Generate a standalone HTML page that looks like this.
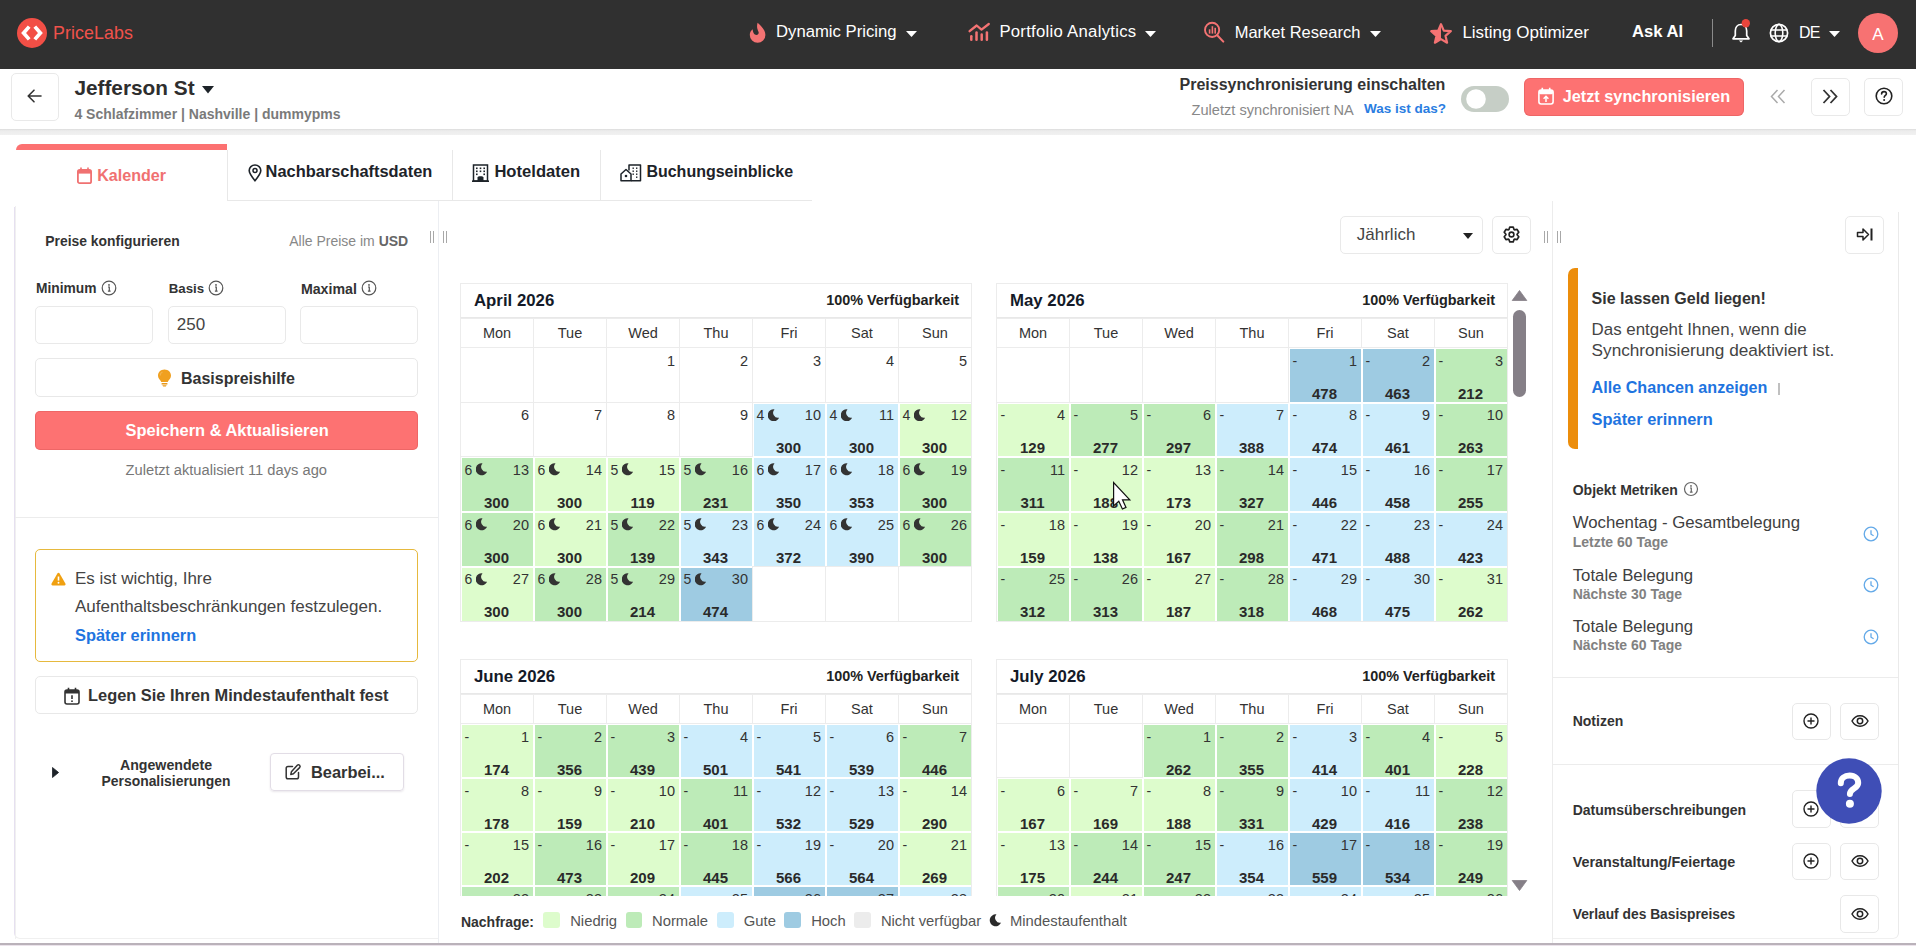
<!DOCTYPE html><html><head><meta charset="utf-8"><style>
*{margin:0;padding:0}
html,body{width:1916px;height:946px;overflow:hidden;background:#fff;font-family:"Liberation Sans", sans-serif;}
.t{position:absolute;white-space:nowrap;line-height:1;}
.month{position:absolute;width:512px;height:340px;}
.mhead{position:absolute;left:0;top:0;width:512px;height:36px;border:1px solid #ececec;border-bottom:2px solid #e8e8e8;box-sizing:border-box}
.dn{position:absolute;top:35px;height:30px;border:1px solid #ececec;box-sizing:border-box;text-align:center;line-height:28px;font-size:14.5px;color:#333}
.cell{position:absolute;box-sizing:border-box} .wc{border:1px solid #ececec} .wc .dt{top:5.5px}
.mbord{position:absolute;left:0;top:36px;width:512px;border:1px solid #ececec;border-top:0;box-sizing:border-box;pointer-events:none}
.fill{position:absolute;left:2px;top:1px;right:0;bottom:1px}
.nied{background:#ddfccc} .norm{background:#bdebb8} .gute{background:#cdedfc} .hoch{background:#9ecbe2}
.ms{position:absolute;left:4.5px;top:5.5px;font-size:14px;line-height:1;color:#333}
.moon{position:absolute;left:15.5px;top:6px;width:11.6px;height:12.6px}
.dt{position:absolute;right:4px;top:5.5px;font-size:14.5px;line-height:1;color:#333}
.pr{position:absolute;left:0;right:0;text-align:center;top:37.5px;font-size:15px;font-weight:700;line-height:1;color:#2a2a2a}
</style></head><body>
<div style="position:absolute;left:0px;top:0px;width:1916px;height:69px;box-sizing:border-box;background:#303030"></div>
<svg style="position:absolute;left:17px;top:18px;overflow:visible" width="30" height="30" viewBox="0 0 30 30"><circle cx="15" cy="15" r="15" fill="#f24f46"/><path d="M12.2 8.6 L6.6 15 L12.2 21.4 M17.8 8.6 L23.4 15 L17.8 21.4" stroke="#fff" stroke-width="3.7" fill="none" stroke-linecap="butt" stroke-linejoin="miter"/></svg>
<span class="t" style="left:53.0px;top:24.9px;font-size:17.8px;font-weight:400;color:#f0524b;letter-spacing:0.1px;">PriceLabs</span>
<svg style="position:absolute;left:749px;top:22px;overflow:visible" width="17" height="21" viewBox="0 0 17 21"><path d="M8.6 0.8 C11.8 4 16.4 7.5 16.4 13 A7.8 7.8 0 0 1 0.8 13 C0.8 10.6 1.7 8.7 3.7 7.2 C3.7 10 5.2 12.9 7.5 12.9 C9.2 12.9 10.1 11.4 9.5 9.8 C8.6 7.5 7.3 5 8.6 0.8 Z" fill="#f47373"/></svg>
<span class="t" style="left:776.0px;top:23.9px;font-size:16.7px;font-weight:400;color:#fff;">Dynamic Pricing</span>
<svg style="position:absolute;left:906px;top:30.5px;overflow:visible" width="11" height="6" viewBox="0 0 11 6"><path d="M0 0 L11 0 L5.5 6 Z" fill="#fff"/></svg>
<svg style="position:absolute;left:968px;top:22px;overflow:visible" width="22" height="20" viewBox="0 0 22 20"><path d="M1.6 9.2 L8.7 3.5 L13.5 7.6 L20.8 2" stroke="#f47373" stroke-width="2.3" fill="none" stroke-linecap="round" stroke-linejoin="round"/><g stroke="#f47373" stroke-width="2.5" stroke-linecap="round"><path d="M3.3 14.2 L3.3 17.8"/><path d="M8.5 10.6 L8.5 17.8"/><path d="M13.7 12.6 L13.7 17.8"/><path d="M18.9 10.6 L18.9 17.8"/></g></svg>
<span class="t" style="left:999.4px;top:23.9px;font-size:16.7px;font-weight:400;color:#fff;letter-spacing:0.28px;">Portfolio Analytics</span>
<svg style="position:absolute;left:1145px;top:30.5px;overflow:visible" width="11" height="6" viewBox="0 0 11 6"><path d="M0 0 L11 0 L5.5 6 Z" fill="#fff"/></svg>
<svg style="position:absolute;left:1203px;top:22px;overflow:visible" width="22" height="21" viewBox="0 0 22 21"><circle cx="9.1" cy="7.9" r="7.1" stroke="#f47373" stroke-width="1.9" fill="none"/><path d="M14.2 13.2 L20.3 19.6" stroke="#f47373" stroke-width="2.1" stroke-linecap="round"/><rect x="5.8" y="7.3" width="1.6" height="4.3" fill="#f47373"/><rect x="8.6" y="4.2" width="1.6" height="7.4" fill="#f47373"/><rect x="11.4" y="5.8" width="1.6" height="5.8" fill="#f47373"/></svg>
<span class="t" style="left:1234.7px;top:24.0px;font-size:16.5px;font-weight:400;color:#fff;">Market Research</span>
<svg style="position:absolute;left:1370px;top:30.5px;overflow:visible" width="11" height="6" viewBox="0 0 11 6"><path d="M0 0 L11 0 L5.5 6 Z" fill="#fff"/></svg>
<svg style="position:absolute;left:1430px;top:23px;overflow:visible" width="22" height="21" viewBox="0 0 22 21"><path d="M11 1.2 L13.8 7.6 L20.8 8.2 L15.5 12.8 L17.1 19.7 L11 16.1 L4.9 19.7 L6.5 12.8 L1.2 8.2 L8.2 7.6 Z" fill="none" stroke="#f47373" stroke-width="2.2" stroke-linejoin="round"/><path d="M11 1.2 L11 16.1 L4.9 19.7 L6.5 12.8 L1.2 8.2 L8.2 7.6 Z" fill="#f47373"/></svg>
<span class="t" style="left:1462.4px;top:23.6px;font-size:17px;font-weight:400;color:#fff;">Listing Optimizer</span>
<span class="t" style="left:1632.0px;top:24.4px;font-size:16.6px;font-weight:700;color:#fff;">Ask AI</span>
<div style="position:absolute;left:1712px;top:19px;width:1px;height:28px;box-sizing:border-box;background:#8a8a8a"></div>
<svg style="position:absolute;left:1731px;top:20px;overflow:visible" width="22" height="25" viewBox="0 0 22 25"><path d="M10 4.5 C6.2 4.5 4.3 7.5 4.3 11 L4.3 15.5 L2 18.8 L18 18.8 L15.7 15.5 L15.7 11 C15.7 7.5 13.8 4.5 10 4.5 Z" stroke="#fff" stroke-width="1.7" fill="none" stroke-linejoin="round"/><path d="M7.8 20.5 L12.2 20.5 L10 22.6 Z" fill="#fff"/><circle cx="14.8" cy="3.2" r="4.2" fill="#e8453c"/></svg>
<svg style="position:absolute;left:1769px;top:23px;overflow:visible" width="20" height="20" viewBox="0 0 20 20"><circle cx="10" cy="10" r="8.6" stroke="#fff" stroke-width="1.7" fill="none"/><ellipse cx="10" cy="10" rx="3.8" ry="8.6" stroke="#fff" stroke-width="1.6" fill="none"/><path d="M1.6 7 L18.4 7 M1.6 13 L18.4 13" stroke="#fff" stroke-width="1.6"/></svg>
<span class="t" style="left:1799.0px;top:24.8px;font-size:16px;font-weight:400;color:#fff;letter-spacing:-0.8px;">DE</span>
<svg style="position:absolute;left:1829px;top:30.5px;overflow:visible" width="11" height="6" viewBox="0 0 11 6"><path d="M0 0 L11 0 L5.5 6 Z" fill="#fff"/></svg>
<svg style="position:absolute;left:1858px;top:13px;overflow:visible" width="40" height="40" viewBox="0 0 40 40"><circle cx="20" cy="20" r="20" fill="#f77272"/></svg>
<span class="t" style="left:1878.0px;transform:translateX(-50%);top:25.6px;font-size:17px;font-weight:400;color:#fff;">A</span>
<div style="position:absolute;left:0;top:129px;width:1916px;height:6px;background:linear-gradient(#dcdcdc,#ececec 30%,#f1f1f1)"></div>
<div style="position:absolute;left:11px;top:73px;width:48px;height:48px;box-sizing:border-box;border:1px solid #e9e9e9;border-radius:5px;background:#fff"></div>
<svg style="position:absolute;left:27px;top:89px;overflow:visible" width="15" height="14" viewBox="0 0 15 14"><path d="M14 7 L1.5 7 M7 1.2 L1.2 7 L7 12.8" stroke="#333" stroke-width="1.6" fill="none" stroke-linecap="round" stroke-linejoin="round"/></svg>
<span class="t" style="left:74.4px;top:78.2px;font-size:20.8px;font-weight:700;color:#2e2e2e;">Jefferson St</span>
<svg style="position:absolute;left:201.5px;top:86px;overflow:visible" width="12" height="7.5" viewBox="0 0 12 7.5"><path d="M0 0 L12 0 L6.0 7.5 Z" fill="#1d2329"/></svg>
<span class="t" style="left:74.4px;top:107.4px;font-size:14px;font-weight:700;color:#7a7a7a;">4 Schlafzimmer | Nashville | dummypms</span>
<span class="t" style="left:1179.5px;top:76.6px;font-size:16px;font-weight:700;color:#333;">Preissynchronisierung einschalten</span>
<span class="t" style="left:1191.6px;top:102.9px;font-size:14.6px;font-weight:400;color:#888;">Zuletzt synchronisiert NA</span>
<span class="t" style="left:1364.0px;top:102.4px;font-size:13.5px;font-weight:700;color:#2a7de1;">Was ist das?</span>
<div style="position:absolute;left:1461px;top:86px;width:48px;height:26px;box-sizing:border-box;background:#c6cec6;border-radius:13px"></div>
<svg style="position:absolute;left:1465.5px;top:89px;overflow:visible" width="20" height="20" viewBox="0 0 20 20"><circle cx="10" cy="10" r="9.8" fill="#fff"/></svg>
<div style="position:absolute;left:1524px;top:78px;width:220px;height:38px;box-sizing:border-box;background:#fd7272;border-radius:6px;box-shadow:inset 0 0 0 1px rgba(210,80,80,0.35)"></div>
<svg style="position:absolute;left:1537.5px;top:87px;overflow:visible" width="16" height="18" viewBox="0 0 16 18"><rect x="0.9" y="3" width="14.2" height="14" rx="2.2" stroke="#fff" stroke-width="1.6" fill="none"/><rect x="1" y="3" width="14" height="4.2" rx="1.5" fill="#fff"/><path d="M4.3 0.8 L4.3 4 M11.7 0.8 L11.7 4" stroke="#fff" stroke-width="1.6"/><path d="M8 15 L8 9.5 M5.6 11.8 L8 9.3 L10.4 11.8" stroke="#fff" stroke-width="1.5" fill="none"/></svg>
<span class="t" style="left:1562.7px;top:87.7px;font-size:16.3px;font-weight:700;color:#fff;">Jetzt synchronisieren</span>
<svg style="position:absolute;left:1770px;top:89px;overflow:visible" width="16" height="15" viewBox="0 0 16 15"><path d="M7.5 1 L1.5 7.5 L7.5 14 M14.5 1 L8.5 7.5 L14.5 14" stroke="#aaa" stroke-width="1.5" fill="none"/></svg>
<div style="position:absolute;left:1811px;top:78px;width:39px;height:38px;box-sizing:border-box;border:1px solid #e9e9e9;border-radius:5px"></div>
<svg style="position:absolute;left:1822px;top:89px;overflow:visible" width="16" height="15" viewBox="0 0 16 15"><path d="M1.5 1 L7.5 7.5 L1.5 14 M8.5 1 L14.5 7.5 L8.5 14" stroke="#333" stroke-width="1.8" fill="none"/></svg>
<div style="position:absolute;left:1864px;top:78px;width:39px;height:38px;box-sizing:border-box;border:1px solid #e9e9e9;border-radius:5px"></div>
<svg style="position:absolute;left:1874.5px;top:87px;overflow:visible" width="18" height="18" viewBox="0 0 18 18"><circle cx="9" cy="9" r="7.8" stroke="#222" stroke-width="1.6" fill="none"/><path d="M6.6 7 C6.6 5.4 7.7 4.6 9 4.6 C10.4 4.6 11.4 5.5 11.4 6.7 C11.4 8.3 9.2 8.4 9.2 10.3" stroke="#222" stroke-width="1.6" fill="none" stroke-linecap="round"/><circle cx="9.1" cy="12.9" r="1" fill="#222"/></svg>
<div style="position:absolute;left:16px;top:144px;width:211px;height:6px;background:#fc7171;border-radius:6px 0 0 0"></div>
<div style="position:absolute;left:227px;top:150px;width:1px;height:51px;box-sizing:border-box;background:#e8e8e8"></div>
<div style="position:absolute;left:452px;top:150px;width:1px;height:51px;box-sizing:border-box;background:#e8e8e8"></div>
<div style="position:absolute;left:600px;top:150px;width:1px;height:51px;box-sizing:border-box;background:#e8e8e8"></div>
<div style="position:absolute;left:227px;top:200px;width:585px;height:1px;box-sizing:border-box;background:#e8e8e8"></div>
<svg style="position:absolute;left:77px;top:167px;overflow:visible" width="15" height="17" viewBox="0 0 15 17"><rect x="0.9" y="3" width="13.2" height="13.2" rx="1.8" stroke="#f07171" stroke-width="1.8" fill="none"/><rect x="1" y="3" width="13" height="3.6" fill="#f07171"/><path d="M4 0.5 L4 4 M11 0.5 L11 4" stroke="#f07171" stroke-width="1.6"/></svg>
<span class="t" style="left:97.2px;top:166.7px;font-size:16.1px;font-weight:700;color:#f07171;">Kalender</span>
<svg style="position:absolute;left:248px;top:164px;overflow:visible" width="14" height="18" viewBox="0 0 14 18"><path d="M7 16.8 C3.5 12.5 1.2 9.6 1.2 6.6 C1.2 3.4 3.8 1 7 1 C10.2 1 12.8 3.4 12.8 6.6 C12.8 9.6 10.5 12.5 7 16.8 Z" stroke="#1d2329" stroke-width="1.6" fill="none" stroke-linejoin="round"/><circle cx="7" cy="6.4" r="2" stroke="#1d2329" stroke-width="1.5" fill="none"/></svg>
<span class="t" style="left:265.6px;top:163.1px;font-size:16.4px;font-weight:700;color:#1d2329;">Nachbarschaftsdaten</span>
<svg style="position:absolute;left:472px;top:164px;overflow:visible" width="17" height="18" viewBox="0 0 17 18"><rect x="1.5" y="1" width="14" height="16" stroke="#1d2329" stroke-width="1.5" fill="none"/><path d="M0 17.2 L17 17.2" stroke="#1d2329" stroke-width="1.6"/><g fill="#1d2329"><rect x="4" y="3.5" width="1.6" height="1.6"/><rect x="7.7" y="3.5" width="1.6" height="1.6"/><rect x="11.4" y="3.5" width="1.6" height="1.6"/><rect x="4" y="6.5" width="1.6" height="1.6"/><rect x="7.7" y="6.5" width="1.6" height="1.6"/><rect x="11.4" y="6.5" width="1.6" height="1.6"/><rect x="4" y="9.5" width="1.6" height="1.6"/><rect x="11.4" y="9.5" width="1.6" height="1.6"/><path d="M5.5 17 L5.5 13.5 C5.5 11.8 11.5 11.8 11.5 13.5 L11.5 17 Z"/></g></svg>
<span class="t" style="left:494.4px;top:163.9px;font-size:16.6px;font-weight:700;color:#1d2329;">Hoteldaten</span>
<svg style="position:absolute;left:620px;top:164px;overflow:visible" width="22" height="18" viewBox="0 0 22 18"><path d="M1 16.8 L1 10 L6 5.5 L11 10 L11 16.8 Z" stroke="#1d2329" stroke-width="1.5" fill="none" stroke-linejoin="round"/><circle cx="6" cy="12" r="1.3" fill="#1d2329"/><path d="M9 6.5 L9 1 L20.5 1 L20.5 16.8 L11 16.8" stroke="#1d2329" stroke-width="1.5" fill="none" stroke-linejoin="round"/><g fill="#1d2329"><rect x="12.5" y="3.5" width="1.4" height="1.4"/><rect x="16" y="3.5" width="1.4" height="1.4"/><rect x="12.5" y="6.5" width="1.4" height="1.4"/><rect x="16" y="6.5" width="1.4" height="1.4"/><rect x="12.5" y="9.5" width="1.4" height="1.4"/><rect x="16" y="9.5" width="1.4" height="1.4"/><rect x="16" y="12.5" width="1.4" height="1.4"/></g></svg>
<span class="t" style="left:646.4px;top:163.5px;font-size:16px;font-weight:700;color:#1d2329;">Buchungseinblicke</span>
<div style="position:absolute;left:14px;top:207px;width:425px;height:732px;border-left:1px solid #e6e0f0;border-bottom:1px solid #f0f0f0;border-bottom-left-radius:6px;box-sizing:border-box"></div>
<div style="position:absolute;left:15px;top:206px;width:1px;height:733px;box-sizing:border-box;background:#f0f0f0"></div>
<div style="position:absolute;left:438px;top:201px;width:1px;height:742px;box-sizing:border-box;background:#eceef2"></div>
<span class="t" style="left:45.3px;top:234.5px;font-size:13.9px;font-weight:700;color:#333;">Preise konfigurieren</span>
<span class="t" style="left:289.2px;top:234.4px;font-size:14px;font-weight:400;color:#888;">Alle Preise im <b style="color:#666">USD</b></span>
<div style="position:absolute;left:429.5px;top:231px;width:1.6px;height:11.5px;background:#a8a8a8"></div><div style="position:absolute;left:432.7px;top:231px;width:1.6px;height:11.5px;background:#a8a8a8"></div>
<div style="position:absolute;left:442.5px;top:231px;width:1.6px;height:11.5px;background:#a8a8a8"></div><div style="position:absolute;left:445.7px;top:231px;width:1.6px;height:11.5px;background:#a8a8a8"></div>
<span class="t" style="left:36.0px;top:281.9px;font-size:13.8px;font-weight:700;color:#333;">Minimum</span>
<svg style="position:absolute;left:101px;top:280px;overflow:visible" width="16" height="16" viewBox="0 0 16 16"><circle cx="8" cy="8" r="6.8" stroke="#555" stroke-width="1.2" fill="none"/><circle cx="8" cy="4.9" r="0.9" fill="#555"/><path d="M7 7 L8.3 7 L8.3 11.2 M6.9 11.2 L9.6 11.2" stroke="#555" stroke-width="1.2" fill="none"/></svg>
<span class="t" style="left:168.7px;top:282.3px;font-size:13.3px;font-weight:700;color:#333;">Basis</span>
<svg style="position:absolute;left:208px;top:280px;overflow:visible" width="16" height="16" viewBox="0 0 16 16"><circle cx="8" cy="8" r="6.8" stroke="#555" stroke-width="1.2" fill="none"/><circle cx="8" cy="4.9" r="0.9" fill="#555"/><path d="M7 7 L8.3 7 L8.3 11.2 M6.9 11.2 L9.6 11.2" stroke="#555" stroke-width="1.2" fill="none"/></svg>
<span class="t" style="left:300.9px;top:281.6px;font-size:14.2px;font-weight:700;color:#333;">Maximal</span>
<svg style="position:absolute;left:361px;top:280px;overflow:visible" width="16" height="16" viewBox="0 0 16 16"><circle cx="8" cy="8" r="6.8" stroke="#555" stroke-width="1.2" fill="none"/><circle cx="8" cy="4.9" r="0.9" fill="#555"/><path d="M7 7 L8.3 7 L8.3 11.2 M6.9 11.2 L9.6 11.2" stroke="#555" stroke-width="1.2" fill="none"/></svg>
<div style="position:absolute;left:35px;top:306px;width:118px;height:38px;box-sizing:border-box;border:1px solid #e9e9e9;border-radius:5px"></div>
<div style="position:absolute;left:168px;top:306px;width:118px;height:38px;box-sizing:border-box;border:1px solid #e9e9e9;border-radius:5px"></div>
<div style="position:absolute;left:300px;top:306px;width:118px;height:38px;box-sizing:border-box;border:1px solid #e9e9e9;border-radius:5px"></div>
<span class="t" style="left:176.8px;top:316.3px;font-size:17px;font-weight:400;color:#444;">250</span>
<div style="position:absolute;left:35px;top:358px;width:383px;height:39px;box-sizing:border-box;border:1px solid #e8e8e8;border-radius:5px"></div>
<svg style="position:absolute;left:157px;top:369px;overflow:visible" width="15" height="18" viewBox="0 0 15 18"><path d="M7.5 0.5 C3.6 0.5 1 3.3 1 6.6 C1 9 2.4 10.6 3.8 12 L4.2 13 L10.8 13 L11.2 12 C12.6 10.6 14 9 14 6.6 C14 3.3 11.4 0.5 7.5 0.5 Z" fill="#f0a020"/><path d="M5.5 3 C4 3.6 3.2 5 3.3 6.5" stroke="#fff3" stroke-width="1.2" fill="none"/><rect x="4.5" y="14" width="6" height="1.6" rx="0.6" fill="#e89818"/><path d="M5.3 16.3 L9.7 16.3 L8.8 17.6 L6.2 17.6 Z" fill="#e89818"/></svg>
<span class="t" style="left:181.0px;top:370.7px;font-size:16px;font-weight:700;color:#333;">Basispreishilfe</span>
<div style="position:absolute;left:35px;top:411px;width:383px;height:39px;box-sizing:border-box;background:#fd7272;border-radius:5px;box-shadow:inset 0 0 0 1px rgba(210,80,80,0.35)"></div>
<span class="t" style="left:125.6px;top:422.1px;font-size:16.45px;font-weight:700;color:#fff;">Speichern &amp; Aktualisieren</span>
<span class="t" style="left:125.6px;top:462.9px;font-size:14.7px;font-weight:400;color:#777;">Zuletzt aktualisiert 11 days ago</span>
<div style="position:absolute;left:15px;top:517px;width:423px;height:1px;box-sizing:border-box;background:#ececec"></div>
<div style="position:absolute;left:35px;top:549px;width:383px;height:113px;box-sizing:border-box;border:1px solid #e6b93e;border-radius:5px"></div>
<svg style="position:absolute;left:51px;top:571.5px;overflow:visible" width="15" height="14" viewBox="0 0 15 14"><path d="M7.5 0.8 C8 0.8 8.3 1 8.6 1.5 L14.4 11.6 C14.9 12.5 14.4 13.4 13.4 13.4 L1.6 13.4 C0.6 13.4 0.1 12.5 0.6 11.6 L6.4 1.5 C6.7 1 7 0.8 7.5 0.8 Z" fill="#f0a010"/><path d="M7.5 4.5 L7.5 8.6" stroke="#fff" stroke-width="1.6"/><circle cx="7.5" cy="10.8" r="0.95" fill="#fff"/></svg>
<span class="t" style="left:75.0px;top:569.9px;font-size:17px;font-weight:400;color:#444;">Es ist wichtig, Ihre</span>
<span class="t" style="left:75.0px;top:598.1px;font-size:17px;font-weight:400;color:#444;">Aufenthaltsbeschränkungen festzulegen.</span>
<span class="t" style="left:75.0px;top:626.5px;font-size:16.4px;font-weight:700;color:#1e74e0;">Später erinnern</span>
<div style="position:absolute;left:35px;top:676px;width:383px;height:38px;box-sizing:border-box;border:1px solid #e8e8e8;border-radius:5px"></div>
<svg style="position:absolute;left:63.5px;top:686.5px;overflow:visible" width="16" height="18" viewBox="0 0 16 18"><rect x="1" y="3" width="14" height="14" rx="2" stroke="#333" stroke-width="1.6" fill="none"/><rect x="1" y="3" width="14" height="3.5" fill="#333"/><path d="M4.5 0.8 L4.5 4 M11.5 0.8 L11.5 4" stroke="#333" stroke-width="1.6"/><path d="M8 8.3 L8 12" stroke="#333" stroke-width="1.6"/><circle cx="8" cy="14.2" r="0.9" fill="#333"/></svg>
<span class="t" style="left:88.0px;top:686.9px;font-size:16.4px;font-weight:700;color:#333;">Legen Sie Ihren Mindestaufenthalt fest</span>
<svg style="position:absolute;left:52px;top:767px;overflow:visible" width="7" height="11" viewBox="0 0 7 11"><path d="M0.5 0.5 L6.6 5.5 L0.5 10.5 Z" fill="#1d2329" stroke="#1d2329" stroke-width="0.8" stroke-linejoin="round"/></svg>
<span class="t" style="left:166.0px;transform:translateX(-50%);top:757.6px;font-size:14.2px;font-weight:700;color:#333;">Angewendete</span>
<span class="t" style="left:166.0px;transform:translateX(-50%);top:775.0px;font-size:13.9px;font-weight:700;color:#333;">Personalisierungen</span>
<div style="position:absolute;left:269.5px;top:753px;width:134.5px;height:38px;box-sizing:border-box;border:1px solid #e2dde6;border-radius:4px;box-shadow:0 1px 2px rgba(80,60,90,0.12)"></div>
<svg style="position:absolute;left:285px;top:764px;overflow:visible" width="16" height="16" viewBox="0 0 16 16"><path d="M7.5 2.5 L3 2.5 C2 2.5 1.2 3.3 1.2 4.3 L1.2 13 C1.2 14 2 14.8 3 14.8 L11.7 14.8 C12.7 14.8 13.5 14 13.5 13 L13.5 8.5" stroke="#333" stroke-width="1.5" fill="none" stroke-linecap="round"/><path d="M12.3 1.3 C12.9 0.7 13.9 0.7 14.6 1.3 C15.2 2 15.2 3 14.6 3.6 L8.4 9.8 L5.8 10.4 L6.4 7.8 Z" stroke="#333" stroke-width="1.5" fill="none" stroke-linejoin="round"/></svg>
<span class="t" style="left:311.0px;top:764.1px;font-size:16.4px;font-weight:700;color:#333;">Bearbei...</span>
<div style="position:absolute;left:1339.5px;top:216px;width:143.5px;height:38px;box-sizing:border-box;border:1px solid #e9e9e9;border-radius:5px"></div>
<span class="t" style="left:1356.8px;top:225.6px;font-size:17px;font-weight:400;color:#444;">Jährlich</span>
<svg style="position:absolute;left:1462.5px;top:233px;overflow:visible" width="10" height="6" viewBox="0 0 10 6"><path d="M0 0 L10 0 L5.0 6 Z" fill="#222"/></svg>
<div style="position:absolute;left:1492px;top:216px;width:39px;height:38px;box-sizing:border-box;border:1px solid #e9e9e9;border-radius:5px"></div>
<svg style="position:absolute;left:1503px;top:226px;overflow:visible" width="17" height="17" viewBox="0 0 17 17"><path d="M14.09 8.21 L15.77 6.28 L14.06 3.32 L11.55 3.80 L11.04 3.51 L10.21 1.09 L6.79 1.09 L5.96 3.51 L5.45 3.80 L2.94 3.32 L1.23 6.28 L2.91 8.21 L2.91 8.79 L1.23 10.72 L2.94 13.68 L5.45 13.20 L5.96 13.49 L6.79 15.91 L10.21 15.91 L11.04 13.49 L11.55 13.20 L14.06 13.68 L15.77 10.72 L14.09 8.79 Z" stroke="#222" stroke-width="1.7" fill="none" stroke-linejoin="round"/><circle cx="8.5" cy="8.5" r="2.4" stroke="#222" stroke-width="1.6" fill="none"/></svg>
<div style="position:absolute;left:1543.5px;top:231px;width:1.6px;height:11.5px;background:#a8a8a8"></div><div style="position:absolute;left:1546.7px;top:231px;width:1.6px;height:11.5px;background:#a8a8a8"></div>
<div style="position:absolute;left:1556.5px;top:231px;width:1.6px;height:11.5px;background:#a8a8a8"></div><div style="position:absolute;left:1559.7px;top:231px;width:1.6px;height:11.5px;background:#a8a8a8"></div>
<div style="position:absolute;left:1552px;top:201px;width:1px;height:742px;box-sizing:border-box;background:#ececec"></div>
<div style="position:absolute;left:1553px;top:212px;width:346px;height:727px;border-right:1px solid #eaeaea;border-bottom:1px solid #f0f0f0;border-bottom-right-radius:6px;box-sizing:border-box"></div>
<div style="position:absolute;left:1845px;top:216px;width:39px;height:38px;box-sizing:border-box;border:1px solid #e9e9e9;border-radius:5px"></div>
<svg style="position:absolute;left:1856px;top:226.5px;overflow:visible" width="18" height="15" viewBox="0 0 18 15"><path d="M1.5 5.5 L7 5.5 L7 2 L12.5 7.5 L7 13 L7 9.5 L1.5 9.5 Z" stroke="#222" stroke-width="1.5" fill="none" stroke-linejoin="round"/><path d="M15.5 1.5 L15.5 13.5" stroke="#222" stroke-width="2"/></svg>
<div style="position:absolute;left:1568px;top:268px;width:10px;height:181px;background:#ec8d0b;border-radius:7px 0 0 7px"></div>
<span class="t" style="left:1591.6px;top:290.5px;font-size:16px;font-weight:700;color:#333;">Sie lassen Geld liegen!</span>
<span class="t" style="left:1591.6px;top:321.9px;font-size:16.9px;font-weight:400;color:#444;">Das entgeht Ihnen, wenn die</span>
<span class="t" style="left:1591.6px;top:342.4px;font-size:17.2px;font-weight:400;color:#444;">Synchronisierung deaktiviert ist.</span>
<span class="t" style="left:1591.6px;top:379.0px;font-size:16.15px;font-weight:700;color:#1e74e0;">Alle Chancen anzeigen</span>
<div style="position:absolute;left:1777.5px;top:383px;width:2.0px;height:12px;box-sizing:border-box;background:#c0c0c0"></div>
<span class="t" style="left:1591.6px;top:411.1px;font-size:16.4px;font-weight:700;color:#1e74e0;">Später erinnern</span>
<span class="t" style="left:1572.7px;top:483.3px;font-size:14px;font-weight:700;color:#333;">Objekt Metriken</span>
<svg style="position:absolute;left:1683px;top:481px;overflow:visible" width="16" height="16" viewBox="0 0 16 16"><circle cx="8" cy="8" r="6.5" stroke="#666" stroke-width="1.2" fill="none"/><circle cx="8" cy="4.9" r="0.9" fill="#666"/><path d="M7 7 L8.3 7 L8.3 11.2 M6.9 11.2 L9.6 11.2" stroke="#666" stroke-width="1.2" fill="none"/></svg>
<span class="t" style="left:1572.7px;top:515.2px;font-size:16.8px;font-weight:400;color:#404040;">Wochentag - Gesamtbelegung</span>
<span class="t" style="left:1572.7px;top:534.6px;font-size:14px;font-weight:700;color:#818181;">Letzte 60 Tage</span>
<svg style="position:absolute;left:1863px;top:526px;overflow:visible" width="16" height="16" viewBox="0 0 16 16"><circle cx="8" cy="8" r="6.8" stroke="#63a9e8" stroke-width="1.3" fill="none"/><path d="M8 4.3 L8 8.2 L10.6 9.8" stroke="#63a9e8" stroke-width="1.3" fill="none"/></svg>
<span class="t" style="left:1572.7px;top:567.5px;font-size:16.8px;font-weight:400;color:#404040;">Totale Belegung</span>
<span class="t" style="left:1572.7px;top:586.6px;font-size:14px;font-weight:700;color:#818181;">Nächste 30 Tage</span>
<svg style="position:absolute;left:1863px;top:577px;overflow:visible" width="16" height="16" viewBox="0 0 16 16"><circle cx="8" cy="8" r="6.8" stroke="#63a9e8" stroke-width="1.3" fill="none"/><path d="M8 4.3 L8 8.2 L10.6 9.8" stroke="#63a9e8" stroke-width="1.3" fill="none"/></svg>
<span class="t" style="left:1572.7px;top:619.4px;font-size:16.8px;font-weight:400;color:#404040;">Totale Belegung</span>
<span class="t" style="left:1572.7px;top:638.1px;font-size:14px;font-weight:700;color:#818181;">Nächste 60 Tage</span>
<svg style="position:absolute;left:1863px;top:629px;overflow:visible" width="16" height="16" viewBox="0 0 16 16"><circle cx="8" cy="8" r="6.8" stroke="#63a9e8" stroke-width="1.3" fill="none"/><path d="M8 4.3 L8 8.2 L10.6 9.8" stroke="#63a9e8" stroke-width="1.3" fill="none"/></svg>
<div style="position:absolute;left:1553px;top:677px;width:345px;height:1px;box-sizing:border-box;background:#ececec"></div>
<div style="position:absolute;left:1553px;top:764px;width:345px;height:1px;box-sizing:border-box;background:#ececec"></div>
<span class="t" style="left:1572.7px;top:714.4px;font-size:14px;font-weight:700;color:#333;">Notizen</span>
<div style="position:absolute;left:1791.5px;top:702.5px;width:39.0px;height:37.5px;box-sizing:border-box;border:1px solid #e8e8e8;border-radius:5px"></div>
<svg style="position:absolute;left:1803.0px;top:713.0px;overflow:visible" width="16" height="16" viewBox="0 0 16 16"><circle cx="8" cy="8" r="7" stroke="#222" stroke-width="1.4" fill="none"/><path d="M8 4.5 L8 11.5 M4.5 8 L11.5 8" stroke="#222" stroke-width="1.4"/></svg>
<div style="position:absolute;left:1840px;top:702.5px;width:39px;height:37.5px;box-sizing:border-box;border:1px solid #e8e8e8;border-radius:5px"></div>
<svg style="position:absolute;left:1850.5px;top:715.0px;overflow:visible" width="18" height="12" viewBox="0 0 18 12"><path d="M1 6 C3 2.3 5.8 0.8 9 0.8 C12.2 0.8 15 2.3 17 6 C15 9.7 12.2 11.2 9 11.2 C5.8 11.2 3 9.7 1 6 Z" stroke="#222" stroke-width="1.5" fill="none"/><circle cx="9" cy="6" r="2.7" stroke="#222" stroke-width="1.5" fill="none"/></svg>
<span class="t" style="left:1572.7px;top:803.1px;font-size:14px;font-weight:700;color:#333;">Datumsüberschreibungen</span>
<div style="position:absolute;left:1791.5px;top:790px;width:39.0px;height:37.5px;box-sizing:border-box;border:1px solid #e8e8e8;border-radius:5px"></div>
<svg style="position:absolute;left:1803.0px;top:800.5px;overflow:visible" width="16" height="16" viewBox="0 0 16 16"><circle cx="8" cy="8" r="7" stroke="#222" stroke-width="1.4" fill="none"/><path d="M8 4.5 L8 11.5 M4.5 8 L11.5 8" stroke="#222" stroke-width="1.4"/></svg>
<div style="position:absolute;left:1840px;top:790px;width:39px;height:37.5px;box-sizing:border-box;border:1px solid #e8e8e8;border-radius:5px"></div>
<svg style="position:absolute;left:1850.5px;top:802.5px;overflow:visible" width="18" height="12" viewBox="0 0 18 12"><path d="M1 6 C3 2.3 5.8 0.8 9 0.8 C12.2 0.8 15 2.3 17 6 C15 9.7 12.2 11.2 9 11.2 C5.8 11.2 3 9.7 1 6 Z" stroke="#222" stroke-width="1.5" fill="none"/><circle cx="9" cy="6" r="2.7" stroke="#222" stroke-width="1.5" fill="none"/></svg>
<span class="t" style="left:1572.7px;top:855.0px;font-size:14.35px;font-weight:700;color:#333;">Veranstaltung/Feiertage</span>
<div style="position:absolute;left:1791.5px;top:842.5px;width:39.0px;height:37.5px;box-sizing:border-box;border:1px solid #e8e8e8;border-radius:5px"></div>
<svg style="position:absolute;left:1803.0px;top:853.0px;overflow:visible" width="16" height="16" viewBox="0 0 16 16"><circle cx="8" cy="8" r="7" stroke="#222" stroke-width="1.4" fill="none"/><path d="M8 4.5 L8 11.5 M4.5 8 L11.5 8" stroke="#222" stroke-width="1.4"/></svg>
<div style="position:absolute;left:1840px;top:842.5px;width:39px;height:37.5px;box-sizing:border-box;border:1px solid #e8e8e8;border-radius:5px"></div>
<svg style="position:absolute;left:1850.5px;top:855.0px;overflow:visible" width="18" height="12" viewBox="0 0 18 12"><path d="M1 6 C3 2.3 5.8 0.8 9 0.8 C12.2 0.8 15 2.3 17 6 C15 9.7 12.2 11.2 9 11.2 C5.8 11.2 3 9.7 1 6 Z" stroke="#222" stroke-width="1.5" fill="none"/><circle cx="9" cy="6" r="2.7" stroke="#222" stroke-width="1.5" fill="none"/></svg>
<span class="t" style="left:1572.7px;top:908.1px;font-size:13.8px;font-weight:700;color:#333;">Verlauf des Basispreises</span>
<div style="position:absolute;left:1840px;top:895px;width:39px;height:37.5px;box-sizing:border-box;border:1px solid #e8e8e8;border-radius:5px"></div>
<svg style="position:absolute;left:1850.5px;top:907.5px;overflow:visible" width="18" height="12" viewBox="0 0 18 12"><path d="M1 6 C3 2.3 5.8 0.8 9 0.8 C12.2 0.8 15 2.3 17 6 C15 9.7 12.2 11.2 9 11.2 C5.8 11.2 3 9.7 1 6 Z" stroke="#222" stroke-width="1.5" fill="none"/><circle cx="9" cy="6" r="2.7" stroke="#222" stroke-width="1.5" fill="none"/></svg>
<svg style="position:absolute;left:1815.5px;top:758px;overflow:visible" width="66" height="66" viewBox="0 0 66 66"><circle cx="33" cy="33" r="32.7" fill="#3f4eb6"/><path d="M24.8 25.2 C24.8 20.2 28.6 17.6 33.6 17.6 C39 17.6 42.2 20.9 42.2 25 C42.2 30.6 33.9 30.4 33.9 36" stroke="#fff" stroke-width="6" fill="none" stroke-linecap="round" stroke-linejoin="round"/><circle cx="33.9" cy="45.8" r="4" fill="#fff"/></svg>
<div id="cal" style="position:absolute;left:460px;top:283px;width:1050px;height:613px;overflow:hidden"><div class="month" style="left:0px;top:0px;height:338.70px">
<div class="mhead"></div>
<span class="t" style="left:14px;top:9.7px;font-size:16.8px;font-weight:700;color:#141a28">April 2026</span>
<span class="t" style="right:13px;top:9.9px;font-size:14.4px;font-weight:700;color:#222">100% Verfügbarkeit</span>
<div class="dn" style="left:0px;width:74px;">Mon</div>
<div class="dn" style="left:73px;width:74px;">Tue</div>
<div class="dn" style="left:146px;width:74px;">Wed</div>
<div class="dn" style="left:219px;width:74px;">Thu</div>
<div class="dn" style="left:292px;width:74px;">Fri</div>
<div class="dn" style="left:365px;width:74px;">Sat</div>
<div class="dn" style="left:438px;width:74px;">Sun</div>
<div class="cell wc" style="left:0px;top:64.00px;height:55.74px;width:74px"></div>
<div class="cell wc" style="left:73px;top:64.00px;height:55.74px;width:74px"></div>
<div class="cell wc" style="left:146px;top:64.00px;height:55.74px;width:74px"><span class="dt">1</span></div>
<div class="cell wc" style="left:219px;top:64.00px;height:55.74px;width:74px"><span class="dt">2</span></div>
<div class="cell wc" style="left:292px;top:64.00px;height:55.74px;width:74px"><span class="dt">3</span></div>
<div class="cell wc" style="left:365px;top:64.00px;height:55.74px;width:74px"><span class="dt">4</span></div>
<div class="cell wc" style="left:438px;top:64.00px;height:55.74px;width:74px"><span class="dt">5</span></div>
<div class="cell wc" style="left:0px;top:118.74px;height:55.74px;width:74px"><span class="dt">6</span></div>
<div class="cell wc" style="left:73px;top:118.74px;height:55.74px;width:74px"><span class="dt">7</span></div>
<div class="cell wc" style="left:146px;top:118.74px;height:55.74px;width:74px"><span class="dt">8</span></div>
<div class="cell wc" style="left:219px;top:118.74px;height:55.74px;width:74px"><span class="dt">9</span></div>
<div class="cell" style="left:292px;top:119.74px;height:54.74px;width:73px"><div class="fill gute"></div><span class="ms">4</span><svg class="moon" width="11" height="12" viewBox="0 0 11 12"><path d="M6.2 0.36 A5.7 5.7 0 1 0 10.67 8.18 A4.7 4.7 0 0 1 6.2 0.36 Z" fill="#333"/></svg><span class="dt">10</span><span class="pr">300</span></div>
<div class="cell" style="left:365px;top:119.74px;height:54.74px;width:73px"><div class="fill gute"></div><span class="ms">4</span><svg class="moon" width="11" height="12" viewBox="0 0 11 12"><path d="M6.2 0.36 A5.7 5.7 0 1 0 10.67 8.18 A4.7 4.7 0 0 1 6.2 0.36 Z" fill="#333"/></svg><span class="dt">11</span><span class="pr">300</span></div>
<div class="cell" style="left:438px;top:119.74px;height:54.74px;width:73px"><div class="fill nied"></div><span class="ms">4</span><svg class="moon" width="11" height="12" viewBox="0 0 11 12"><path d="M6.2 0.36 A5.7 5.7 0 1 0 10.67 8.18 A4.7 4.7 0 0 1 6.2 0.36 Z" fill="#333"/></svg><span class="dt">12</span><span class="pr">300</span></div>
<div class="cell" style="left:0px;top:174.48px;height:54.74px;width:73px"><div class="fill norm"></div><span class="ms">6</span><svg class="moon" width="11" height="12" viewBox="0 0 11 12"><path d="M6.2 0.36 A5.7 5.7 0 1 0 10.67 8.18 A4.7 4.7 0 0 1 6.2 0.36 Z" fill="#333"/></svg><span class="dt">13</span><span class="pr">300</span></div>
<div class="cell" style="left:73px;top:174.48px;height:54.74px;width:73px"><div class="fill nied"></div><span class="ms">6</span><svg class="moon" width="11" height="12" viewBox="0 0 11 12"><path d="M6.2 0.36 A5.7 5.7 0 1 0 10.67 8.18 A4.7 4.7 0 0 1 6.2 0.36 Z" fill="#333"/></svg><span class="dt">14</span><span class="pr">300</span></div>
<div class="cell" style="left:146px;top:174.48px;height:54.74px;width:73px"><div class="fill nied"></div><span class="ms">5</span><svg class="moon" width="11" height="12" viewBox="0 0 11 12"><path d="M6.2 0.36 A5.7 5.7 0 1 0 10.67 8.18 A4.7 4.7 0 0 1 6.2 0.36 Z" fill="#333"/></svg><span class="dt">15</span><span class="pr">119</span></div>
<div class="cell" style="left:219px;top:174.48px;height:54.74px;width:73px"><div class="fill norm"></div><span class="ms">5</span><svg class="moon" width="11" height="12" viewBox="0 0 11 12"><path d="M6.2 0.36 A5.7 5.7 0 1 0 10.67 8.18 A4.7 4.7 0 0 1 6.2 0.36 Z" fill="#333"/></svg><span class="dt">16</span><span class="pr">231</span></div>
<div class="cell" style="left:292px;top:174.48px;height:54.74px;width:73px"><div class="fill gute"></div><span class="ms">6</span><svg class="moon" width="11" height="12" viewBox="0 0 11 12"><path d="M6.2 0.36 A5.7 5.7 0 1 0 10.67 8.18 A4.7 4.7 0 0 1 6.2 0.36 Z" fill="#333"/></svg><span class="dt">17</span><span class="pr">350</span></div>
<div class="cell" style="left:365px;top:174.48px;height:54.74px;width:73px"><div class="fill gute"></div><span class="ms">6</span><svg class="moon" width="11" height="12" viewBox="0 0 11 12"><path d="M6.2 0.36 A5.7 5.7 0 1 0 10.67 8.18 A4.7 4.7 0 0 1 6.2 0.36 Z" fill="#333"/></svg><span class="dt">18</span><span class="pr">353</span></div>
<div class="cell" style="left:438px;top:174.48px;height:54.74px;width:73px"><div class="fill norm"></div><span class="ms">6</span><svg class="moon" width="11" height="12" viewBox="0 0 11 12"><path d="M6.2 0.36 A5.7 5.7 0 1 0 10.67 8.18 A4.7 4.7 0 0 1 6.2 0.36 Z" fill="#333"/></svg><span class="dt">19</span><span class="pr">300</span></div>
<div class="cell" style="left:0px;top:229.22px;height:54.74px;width:73px"><div class="fill norm"></div><span class="ms">6</span><svg class="moon" width="11" height="12" viewBox="0 0 11 12"><path d="M6.2 0.36 A5.7 5.7 0 1 0 10.67 8.18 A4.7 4.7 0 0 1 6.2 0.36 Z" fill="#333"/></svg><span class="dt">20</span><span class="pr">300</span></div>
<div class="cell" style="left:73px;top:229.22px;height:54.74px;width:73px"><div class="fill nied"></div><span class="ms">6</span><svg class="moon" width="11" height="12" viewBox="0 0 11 12"><path d="M6.2 0.36 A5.7 5.7 0 1 0 10.67 8.18 A4.7 4.7 0 0 1 6.2 0.36 Z" fill="#333"/></svg><span class="dt">21</span><span class="pr">300</span></div>
<div class="cell" style="left:146px;top:229.22px;height:54.74px;width:73px"><div class="fill norm"></div><span class="ms">5</span><svg class="moon" width="11" height="12" viewBox="0 0 11 12"><path d="M6.2 0.36 A5.7 5.7 0 1 0 10.67 8.18 A4.7 4.7 0 0 1 6.2 0.36 Z" fill="#333"/></svg><span class="dt">22</span><span class="pr">139</span></div>
<div class="cell" style="left:219px;top:229.22px;height:54.74px;width:73px"><div class="fill gute"></div><span class="ms">5</span><svg class="moon" width="11" height="12" viewBox="0 0 11 12"><path d="M6.2 0.36 A5.7 5.7 0 1 0 10.67 8.18 A4.7 4.7 0 0 1 6.2 0.36 Z" fill="#333"/></svg><span class="dt">23</span><span class="pr">343</span></div>
<div class="cell" style="left:292px;top:229.22px;height:54.74px;width:73px"><div class="fill gute"></div><span class="ms">6</span><svg class="moon" width="11" height="12" viewBox="0 0 11 12"><path d="M6.2 0.36 A5.7 5.7 0 1 0 10.67 8.18 A4.7 4.7 0 0 1 6.2 0.36 Z" fill="#333"/></svg><span class="dt">24</span><span class="pr">372</span></div>
<div class="cell" style="left:365px;top:229.22px;height:54.74px;width:73px"><div class="fill gute"></div><span class="ms">6</span><svg class="moon" width="11" height="12" viewBox="0 0 11 12"><path d="M6.2 0.36 A5.7 5.7 0 1 0 10.67 8.18 A4.7 4.7 0 0 1 6.2 0.36 Z" fill="#333"/></svg><span class="dt">25</span><span class="pr">390</span></div>
<div class="cell" style="left:438px;top:229.22px;height:54.74px;width:73px"><div class="fill norm"></div><span class="ms">6</span><svg class="moon" width="11" height="12" viewBox="0 0 11 12"><path d="M6.2 0.36 A5.7 5.7 0 1 0 10.67 8.18 A4.7 4.7 0 0 1 6.2 0.36 Z" fill="#333"/></svg><span class="dt">26</span><span class="pr">300</span></div>
<div class="cell" style="left:0px;top:283.96px;height:54.74px;width:73px"><div class="fill nied"></div><span class="ms">6</span><svg class="moon" width="11" height="12" viewBox="0 0 11 12"><path d="M6.2 0.36 A5.7 5.7 0 1 0 10.67 8.18 A4.7 4.7 0 0 1 6.2 0.36 Z" fill="#333"/></svg><span class="dt">27</span><span class="pr">300</span></div>
<div class="cell" style="left:73px;top:283.96px;height:54.74px;width:73px"><div class="fill norm"></div><span class="ms">6</span><svg class="moon" width="11" height="12" viewBox="0 0 11 12"><path d="M6.2 0.36 A5.7 5.7 0 1 0 10.67 8.18 A4.7 4.7 0 0 1 6.2 0.36 Z" fill="#333"/></svg><span class="dt">28</span><span class="pr">300</span></div>
<div class="cell" style="left:146px;top:283.96px;height:54.74px;width:73px"><div class="fill norm"></div><span class="ms">5</span><svg class="moon" width="11" height="12" viewBox="0 0 11 12"><path d="M6.2 0.36 A5.7 5.7 0 1 0 10.67 8.18 A4.7 4.7 0 0 1 6.2 0.36 Z" fill="#333"/></svg><span class="dt">29</span><span class="pr">214</span></div>
<div class="cell" style="left:219px;top:283.96px;height:54.74px;width:73px"><div class="fill hoch"></div><span class="ms">5</span><svg class="moon" width="11" height="12" viewBox="0 0 11 12"><path d="M6.2 0.36 A5.7 5.7 0 1 0 10.67 8.18 A4.7 4.7 0 0 1 6.2 0.36 Z" fill="#333"/></svg><span class="dt">30</span><span class="pr">474</span></div>
<div class="cell wc" style="left:292px;top:282.96px;height:55.74px;width:74px"></div>
<div class="cell wc" style="left:365px;top:282.96px;height:55.74px;width:74px"></div>
<div class="cell wc" style="left:438px;top:282.96px;height:55.74px;width:74px"></div>
<div class="mbord" style="height:302.70px"></div>
</div><div class="month" style="left:536px;top:0px;height:338.70px">
<div class="mhead"></div>
<span class="t" style="left:14px;top:9.7px;font-size:16.8px;font-weight:700;color:#141a28">May 2026</span>
<span class="t" style="right:13px;top:9.9px;font-size:14.4px;font-weight:700;color:#222">100% Verfügbarkeit</span>
<div class="dn" style="left:0px;width:74px;">Mon</div>
<div class="dn" style="left:73px;width:74px;">Tue</div>
<div class="dn" style="left:146px;width:74px;">Wed</div>
<div class="dn" style="left:219px;width:74px;">Thu</div>
<div class="dn" style="left:292px;width:74px;">Fri</div>
<div class="dn" style="left:365px;width:74px;">Sat</div>
<div class="dn" style="left:438px;width:74px;">Sun</div>
<div class="cell wc" style="left:0px;top:64.00px;height:55.74px;width:74px"></div>
<div class="cell wc" style="left:73px;top:64.00px;height:55.74px;width:74px"></div>
<div class="cell wc" style="left:146px;top:64.00px;height:55.74px;width:74px"></div>
<div class="cell wc" style="left:219px;top:64.00px;height:55.74px;width:74px"></div>
<div class="cell" style="left:292px;top:65.00px;height:54.74px;width:73px"><div class="fill hoch"></div><span class="ms">-</span><span class="dt">1</span><span class="pr">478</span></div>
<div class="cell" style="left:365px;top:65.00px;height:54.74px;width:73px"><div class="fill hoch"></div><span class="ms">-</span><span class="dt">2</span><span class="pr">463</span></div>
<div class="cell" style="left:438px;top:65.00px;height:54.74px;width:73px"><div class="fill norm"></div><span class="ms">-</span><span class="dt">3</span><span class="pr">212</span></div>
<div class="cell" style="left:0px;top:119.74px;height:54.74px;width:73px"><div class="fill nied"></div><span class="ms">-</span><span class="dt">4</span><span class="pr">129</span></div>
<div class="cell" style="left:73px;top:119.74px;height:54.74px;width:73px"><div class="fill norm"></div><span class="ms">-</span><span class="dt">5</span><span class="pr">277</span></div>
<div class="cell" style="left:146px;top:119.74px;height:54.74px;width:73px"><div class="fill norm"></div><span class="ms">-</span><span class="dt">6</span><span class="pr">297</span></div>
<div class="cell" style="left:219px;top:119.74px;height:54.74px;width:73px"><div class="fill gute"></div><span class="ms">-</span><span class="dt">7</span><span class="pr">388</span></div>
<div class="cell" style="left:292px;top:119.74px;height:54.74px;width:73px"><div class="fill gute"></div><span class="ms">-</span><span class="dt">8</span><span class="pr">474</span></div>
<div class="cell" style="left:365px;top:119.74px;height:54.74px;width:73px"><div class="fill gute"></div><span class="ms">-</span><span class="dt">9</span><span class="pr">461</span></div>
<div class="cell" style="left:438px;top:119.74px;height:54.74px;width:73px"><div class="fill norm"></div><span class="ms">-</span><span class="dt">10</span><span class="pr">263</span></div>
<div class="cell" style="left:0px;top:174.48px;height:54.74px;width:73px"><div class="fill norm"></div><span class="ms">-</span><span class="dt">11</span><span class="pr">311</span></div>
<div class="cell" style="left:73px;top:174.48px;height:54.74px;width:73px"><div class="fill nied"></div><span class="ms">-</span><span class="dt">12</span><span class="pr">188</span></div>
<div class="cell" style="left:146px;top:174.48px;height:54.74px;width:73px"><div class="fill nied"></div><span class="ms">-</span><span class="dt">13</span><span class="pr">173</span></div>
<div class="cell" style="left:219px;top:174.48px;height:54.74px;width:73px"><div class="fill norm"></div><span class="ms">-</span><span class="dt">14</span><span class="pr">327</span></div>
<div class="cell" style="left:292px;top:174.48px;height:54.74px;width:73px"><div class="fill gute"></div><span class="ms">-</span><span class="dt">15</span><span class="pr">446</span></div>
<div class="cell" style="left:365px;top:174.48px;height:54.74px;width:73px"><div class="fill gute"></div><span class="ms">-</span><span class="dt">16</span><span class="pr">458</span></div>
<div class="cell" style="left:438px;top:174.48px;height:54.74px;width:73px"><div class="fill norm"></div><span class="ms">-</span><span class="dt">17</span><span class="pr">255</span></div>
<div class="cell" style="left:0px;top:229.22px;height:54.74px;width:73px"><div class="fill nied"></div><span class="ms">-</span><span class="dt">18</span><span class="pr">159</span></div>
<div class="cell" style="left:73px;top:229.22px;height:54.74px;width:73px"><div class="fill nied"></div><span class="ms">-</span><span class="dt">19</span><span class="pr">138</span></div>
<div class="cell" style="left:146px;top:229.22px;height:54.74px;width:73px"><div class="fill nied"></div><span class="ms">-</span><span class="dt">20</span><span class="pr">167</span></div>
<div class="cell" style="left:219px;top:229.22px;height:54.74px;width:73px"><div class="fill norm"></div><span class="ms">-</span><span class="dt">21</span><span class="pr">298</span></div>
<div class="cell" style="left:292px;top:229.22px;height:54.74px;width:73px"><div class="fill gute"></div><span class="ms">-</span><span class="dt">22</span><span class="pr">471</span></div>
<div class="cell" style="left:365px;top:229.22px;height:54.74px;width:73px"><div class="fill gute"></div><span class="ms">-</span><span class="dt">23</span><span class="pr">488</span></div>
<div class="cell" style="left:438px;top:229.22px;height:54.74px;width:73px"><div class="fill gute"></div><span class="ms">-</span><span class="dt">24</span><span class="pr">423</span></div>
<div class="cell" style="left:0px;top:283.96px;height:54.74px;width:73px"><div class="fill norm"></div><span class="ms">-</span><span class="dt">25</span><span class="pr">312</span></div>
<div class="cell" style="left:73px;top:283.96px;height:54.74px;width:73px"><div class="fill norm"></div><span class="ms">-</span><span class="dt">26</span><span class="pr">313</span></div>
<div class="cell" style="left:146px;top:283.96px;height:54.74px;width:73px"><div class="fill nied"></div><span class="ms">-</span><span class="dt">27</span><span class="pr">187</span></div>
<div class="cell" style="left:219px;top:283.96px;height:54.74px;width:73px"><div class="fill norm"></div><span class="ms">-</span><span class="dt">28</span><span class="pr">318</span></div>
<div class="cell" style="left:292px;top:283.96px;height:54.74px;width:73px"><div class="fill gute"></div><span class="ms">-</span><span class="dt">29</span><span class="pr">468</span></div>
<div class="cell" style="left:365px;top:283.96px;height:54.74px;width:73px"><div class="fill gute"></div><span class="ms">-</span><span class="dt">30</span><span class="pr">475</span></div>
<div class="cell" style="left:438px;top:283.96px;height:54.74px;width:73px"><div class="fill nied"></div><span class="ms">-</span><span class="dt">31</span><span class="pr">262</span></div>
<div class="mbord" style="height:302.70px"></div>
</div><div class="month" style="left:0px;top:376px;height:335.50px">
<div class="mhead"></div>
<span class="t" style="left:14px;top:9.7px;font-size:16.8px;font-weight:700;color:#141a28">June 2026</span>
<span class="t" style="right:13px;top:9.9px;font-size:14.4px;font-weight:700;color:#222">100% Verfügbarkeit</span>
<div class="dn" style="left:0px;width:74px;">Mon</div>
<div class="dn" style="left:73px;width:74px;">Tue</div>
<div class="dn" style="left:146px;width:74px;">Wed</div>
<div class="dn" style="left:219px;width:74px;">Thu</div>
<div class="dn" style="left:292px;width:74px;">Fri</div>
<div class="dn" style="left:365px;width:74px;">Sat</div>
<div class="dn" style="left:438px;width:74px;">Sun</div>
<div class="cell" style="left:0px;top:65.00px;height:54.10px;width:73px"><div class="fill nied"></div><span class="ms">-</span><span class="dt">1</span><span class="pr">174</span></div>
<div class="cell" style="left:73px;top:65.00px;height:54.10px;width:73px"><div class="fill norm"></div><span class="ms">-</span><span class="dt">2</span><span class="pr">356</span></div>
<div class="cell" style="left:146px;top:65.00px;height:54.10px;width:73px"><div class="fill norm"></div><span class="ms">-</span><span class="dt">3</span><span class="pr">439</span></div>
<div class="cell" style="left:219px;top:65.00px;height:54.10px;width:73px"><div class="fill gute"></div><span class="ms">-</span><span class="dt">4</span><span class="pr">501</span></div>
<div class="cell" style="left:292px;top:65.00px;height:54.10px;width:73px"><div class="fill gute"></div><span class="ms">-</span><span class="dt">5</span><span class="pr">541</span></div>
<div class="cell" style="left:365px;top:65.00px;height:54.10px;width:73px"><div class="fill gute"></div><span class="ms">-</span><span class="dt">6</span><span class="pr">539</span></div>
<div class="cell" style="left:438px;top:65.00px;height:54.10px;width:73px"><div class="fill norm"></div><span class="ms">-</span><span class="dt">7</span><span class="pr">446</span></div>
<div class="cell" style="left:0px;top:119.10px;height:54.10px;width:73px"><div class="fill nied"></div><span class="ms">-</span><span class="dt">8</span><span class="pr">178</span></div>
<div class="cell" style="left:73px;top:119.10px;height:54.10px;width:73px"><div class="fill nied"></div><span class="ms">-</span><span class="dt">9</span><span class="pr">159</span></div>
<div class="cell" style="left:146px;top:119.10px;height:54.10px;width:73px"><div class="fill nied"></div><span class="ms">-</span><span class="dt">10</span><span class="pr">210</span></div>
<div class="cell" style="left:219px;top:119.10px;height:54.10px;width:73px"><div class="fill norm"></div><span class="ms">-</span><span class="dt">11</span><span class="pr">401</span></div>
<div class="cell" style="left:292px;top:119.10px;height:54.10px;width:73px"><div class="fill gute"></div><span class="ms">-</span><span class="dt">12</span><span class="pr">532</span></div>
<div class="cell" style="left:365px;top:119.10px;height:54.10px;width:73px"><div class="fill gute"></div><span class="ms">-</span><span class="dt">13</span><span class="pr">529</span></div>
<div class="cell" style="left:438px;top:119.10px;height:54.10px;width:73px"><div class="fill nied"></div><span class="ms">-</span><span class="dt">14</span><span class="pr">290</span></div>
<div class="cell" style="left:0px;top:173.20px;height:54.10px;width:73px"><div class="fill nied"></div><span class="ms">-</span><span class="dt">15</span><span class="pr">202</span></div>
<div class="cell" style="left:73px;top:173.20px;height:54.10px;width:73px"><div class="fill norm"></div><span class="ms">-</span><span class="dt">16</span><span class="pr">473</span></div>
<div class="cell" style="left:146px;top:173.20px;height:54.10px;width:73px"><div class="fill nied"></div><span class="ms">-</span><span class="dt">17</span><span class="pr">209</span></div>
<div class="cell" style="left:219px;top:173.20px;height:54.10px;width:73px"><div class="fill norm"></div><span class="ms">-</span><span class="dt">18</span><span class="pr">445</span></div>
<div class="cell" style="left:292px;top:173.20px;height:54.10px;width:73px"><div class="fill gute"></div><span class="ms">-</span><span class="dt">19</span><span class="pr">566</span></div>
<div class="cell" style="left:365px;top:173.20px;height:54.10px;width:73px"><div class="fill gute"></div><span class="ms">-</span><span class="dt">20</span><span class="pr">564</span></div>
<div class="cell" style="left:438px;top:173.20px;height:54.10px;width:73px"><div class="fill nied"></div><span class="ms">-</span><span class="dt">21</span><span class="pr">269</span></div>
<div class="cell" style="left:0px;top:227.30px;height:54.10px;width:73px"><div class="fill norm"></div><span class="ms">-</span><span class="dt">22</span><span class="pr">300</span></div>
<div class="cell" style="left:73px;top:227.30px;height:54.10px;width:73px"><div class="fill norm"></div><span class="ms">-</span><span class="dt">23</span><span class="pr">300</span></div>
<div class="cell" style="left:146px;top:227.30px;height:54.10px;width:73px"><div class="fill norm"></div><span class="ms">-</span><span class="dt">24</span><span class="pr">300</span></div>
<div class="cell" style="left:219px;top:227.30px;height:54.10px;width:73px"><div class="fill gute"></div><span class="ms">-</span><span class="dt">25</span><span class="pr">500</span></div>
<div class="cell" style="left:292px;top:227.30px;height:54.10px;width:73px"><div class="fill hoch"></div><span class="ms">-</span><span class="dt">26</span><span class="pr">500</span></div>
<div class="cell" style="left:365px;top:227.30px;height:54.10px;width:73px"><div class="fill hoch"></div><span class="ms">-</span><span class="dt">27</span><span class="pr">500</span></div>
<div class="cell" style="left:438px;top:227.30px;height:54.10px;width:73px"><div class="fill gute"></div><span class="ms">-</span><span class="dt">28</span><span class="pr">500</span></div>
<div class="cell" style="left:0px;top:281.40px;height:54.10px;width:73px"><div class="fill nied"></div><span class="ms">-</span><span class="dt">29</span><span class="pr">200</span></div>
<div class="cell" style="left:73px;top:281.40px;height:54.10px;width:73px"><div class="fill nied"></div><span class="ms">-</span><span class="dt">30</span><span class="pr">200</span></div>
<div class="cell wc" style="left:146px;top:280.40px;height:55.10px;width:74px"></div>
<div class="cell wc" style="left:219px;top:280.40px;height:55.10px;width:74px"></div>
<div class="cell wc" style="left:292px;top:280.40px;height:55.10px;width:74px"></div>
<div class="cell wc" style="left:365px;top:280.40px;height:55.10px;width:74px"></div>
<div class="cell wc" style="left:438px;top:280.40px;height:55.10px;width:74px"></div>
<div class="mbord" style="height:299.50px"></div>
</div><div class="month" style="left:536px;top:376px;height:335.50px">
<div class="mhead"></div>
<span class="t" style="left:14px;top:9.7px;font-size:16.8px;font-weight:700;color:#141a28">July 2026</span>
<span class="t" style="right:13px;top:9.9px;font-size:14.4px;font-weight:700;color:#222">100% Verfügbarkeit</span>
<div class="dn" style="left:0px;width:74px;">Mon</div>
<div class="dn" style="left:73px;width:74px;">Tue</div>
<div class="dn" style="left:146px;width:74px;">Wed</div>
<div class="dn" style="left:219px;width:74px;">Thu</div>
<div class="dn" style="left:292px;width:74px;">Fri</div>
<div class="dn" style="left:365px;width:74px;">Sat</div>
<div class="dn" style="left:438px;width:74px;">Sun</div>
<div class="cell wc" style="left:0px;top:64.00px;height:55.10px;width:74px"></div>
<div class="cell wc" style="left:73px;top:64.00px;height:55.10px;width:74px"></div>
<div class="cell" style="left:146px;top:65.00px;height:54.10px;width:73px"><div class="fill norm"></div><span class="ms">-</span><span class="dt">1</span><span class="pr">262</span></div>
<div class="cell" style="left:219px;top:65.00px;height:54.10px;width:73px"><div class="fill norm"></div><span class="ms">-</span><span class="dt">2</span><span class="pr">355</span></div>
<div class="cell" style="left:292px;top:65.00px;height:54.10px;width:73px"><div class="fill gute"></div><span class="ms">-</span><span class="dt">3</span><span class="pr">414</span></div>
<div class="cell" style="left:365px;top:65.00px;height:54.10px;width:73px"><div class="fill norm"></div><span class="ms">-</span><span class="dt">4</span><span class="pr">401</span></div>
<div class="cell" style="left:438px;top:65.00px;height:54.10px;width:73px"><div class="fill nied"></div><span class="ms">-</span><span class="dt">5</span><span class="pr">228</span></div>
<div class="cell" style="left:0px;top:119.10px;height:54.10px;width:73px"><div class="fill nied"></div><span class="ms">-</span><span class="dt">6</span><span class="pr">167</span></div>
<div class="cell" style="left:73px;top:119.10px;height:54.10px;width:73px"><div class="fill nied"></div><span class="ms">-</span><span class="dt">7</span><span class="pr">169</span></div>
<div class="cell" style="left:146px;top:119.10px;height:54.10px;width:73px"><div class="fill nied"></div><span class="ms">-</span><span class="dt">8</span><span class="pr">188</span></div>
<div class="cell" style="left:219px;top:119.10px;height:54.10px;width:73px"><div class="fill norm"></div><span class="ms">-</span><span class="dt">9</span><span class="pr">331</span></div>
<div class="cell" style="left:292px;top:119.10px;height:54.10px;width:73px"><div class="fill gute"></div><span class="ms">-</span><span class="dt">10</span><span class="pr">429</span></div>
<div class="cell" style="left:365px;top:119.10px;height:54.10px;width:73px"><div class="fill gute"></div><span class="ms">-</span><span class="dt">11</span><span class="pr">416</span></div>
<div class="cell" style="left:438px;top:119.10px;height:54.10px;width:73px"><div class="fill norm"></div><span class="ms">-</span><span class="dt">12</span><span class="pr">238</span></div>
<div class="cell" style="left:0px;top:173.20px;height:54.10px;width:73px"><div class="fill nied"></div><span class="ms">-</span><span class="dt">13</span><span class="pr">175</span></div>
<div class="cell" style="left:73px;top:173.20px;height:54.10px;width:73px"><div class="fill norm"></div><span class="ms">-</span><span class="dt">14</span><span class="pr">244</span></div>
<div class="cell" style="left:146px;top:173.20px;height:54.10px;width:73px"><div class="fill norm"></div><span class="ms">-</span><span class="dt">15</span><span class="pr">247</span></div>
<div class="cell" style="left:219px;top:173.20px;height:54.10px;width:73px"><div class="fill gute"></div><span class="ms">-</span><span class="dt">16</span><span class="pr">354</span></div>
<div class="cell" style="left:292px;top:173.20px;height:54.10px;width:73px"><div class="fill hoch"></div><span class="ms">-</span><span class="dt">17</span><span class="pr">559</span></div>
<div class="cell" style="left:365px;top:173.20px;height:54.10px;width:73px"><div class="fill hoch"></div><span class="ms">-</span><span class="dt">18</span><span class="pr">534</span></div>
<div class="cell" style="left:438px;top:173.20px;height:54.10px;width:73px"><div class="fill norm"></div><span class="ms">-</span><span class="dt">19</span><span class="pr">249</span></div>
<div class="cell" style="left:0px;top:227.30px;height:54.10px;width:73px"><div class="fill norm"></div><span class="ms">-</span><span class="dt">20</span><span class="pr">300</span></div>
<div class="cell" style="left:73px;top:227.30px;height:54.10px;width:73px"><div class="fill nied"></div><span class="ms">-</span><span class="dt">21</span><span class="pr">300</span></div>
<div class="cell" style="left:146px;top:227.30px;height:54.10px;width:73px"><div class="fill norm"></div><span class="ms">-</span><span class="dt">22</span><span class="pr">300</span></div>
<div class="cell" style="left:219px;top:227.30px;height:54.10px;width:73px"><div class="fill gute"></div><span class="ms">-</span><span class="dt">23</span><span class="pr">300</span></div>
<div class="cell" style="left:292px;top:227.30px;height:54.10px;width:73px"><div class="fill gute"></div><span class="ms">-</span><span class="dt">24</span><span class="pr">300</span></div>
<div class="cell" style="left:365px;top:227.30px;height:54.10px;width:73px"><div class="fill gute"></div><span class="ms">-</span><span class="dt">25</span><span class="pr">300</span></div>
<div class="cell" style="left:438px;top:227.30px;height:54.10px;width:73px"><div class="fill norm"></div><span class="ms">-</span><span class="dt">26</span><span class="pr">300</span></div>
<div class="cell" style="left:0px;top:281.40px;height:54.10px;width:73px"><div class="fill nied"></div><span class="ms">-</span><span class="dt">27</span><span class="pr">300</span></div>
<div class="cell" style="left:73px;top:281.40px;height:54.10px;width:73px"><div class="fill nied"></div><span class="ms">-</span><span class="dt">28</span><span class="pr">300</span></div>
<div class="cell" style="left:146px;top:281.40px;height:54.10px;width:73px"><div class="fill nied"></div><span class="ms">-</span><span class="dt">29</span><span class="pr">300</span></div>
<div class="cell" style="left:219px;top:281.40px;height:54.10px;width:73px"><div class="fill nied"></div><span class="ms">-</span><span class="dt">30</span><span class="pr">300</span></div>
<div class="cell" style="left:292px;top:281.40px;height:54.10px;width:73px"><div class="fill nied"></div><span class="ms">-</span><span class="dt">31</span><span class="pr">300</span></div>
<div class="cell wc" style="left:365px;top:280.40px;height:55.10px;width:74px"></div>
<div class="cell wc" style="left:438px;top:280.40px;height:55.10px;width:74px"></div>
<div class="mbord" style="height:299.50px"></div>
</div></div>
<svg style="position:absolute;left:1512px;top:289.5px;overflow:visible" width="15" height="11" viewBox="0 0 15 11"><path d="M7.5 0.5 L14.8 10.5 L0.2 10.5 Z" fill="#857f87" stroke="#857f87" stroke-width="0.8" stroke-linejoin="round"/></svg>
<div style="position:absolute;left:1513px;top:310px;width:13px;height:87px;box-sizing:border-box;background:#857f87;border-radius:6.5px"></div>
<svg style="position:absolute;left:1512px;top:880px;overflow:visible" width="15" height="11" viewBox="0 0 15 11"><path d="M0.2 0.5 L14.8 0.5 L7.5 10.5 Z" fill="#857f87" stroke="#857f87" stroke-width="0.8" stroke-linejoin="round"/></svg>
<span class="t" style="left:460.9px;top:914.5px;font-size:14px;font-weight:700;color:#333;">Nachfrage:</span>
<div style="position:absolute;left:543.3px;top:912.3px;width:16.5px;height:16.200000000000045px;box-sizing:border-box;background:#ddfccc;border-radius:3px"></div>
<div style="position:absolute;left:625.7px;top:912.3px;width:16.5px;height:16.200000000000045px;box-sizing:border-box;background:#bdebb8;border-radius:3px"></div>
<div style="position:absolute;left:717.3px;top:912.3px;width:16.5px;height:16.200000000000045px;box-sizing:border-box;background:#cdedfc;border-radius:3px"></div>
<div style="position:absolute;left:784.2px;top:912.3px;width:16.5px;height:16.200000000000045px;box-sizing:border-box;background:#9ecbe2;border-radius:3px"></div>
<div style="position:absolute;left:854.1px;top:912.3px;width:16.5px;height:16.200000000000045px;box-sizing:border-box;background:#ececec;border-radius:3px"></div>
<span class="t" style="left:570.2px;top:913.9px;font-size:14.8px;font-weight:400;color:#555;">Niedrig</span>
<span class="t" style="left:652.0px;top:913.9px;font-size:14.8px;font-weight:400;color:#555;">Normale</span>
<span class="t" style="left:743.8px;top:913.9px;font-size:14.8px;font-weight:400;color:#555;">Gute</span>
<span class="t" style="left:811.2px;top:913.9px;font-size:14.8px;font-weight:400;color:#555;">Hoch</span>
<span class="t" style="left:880.9px;top:913.9px;font-size:14.8px;font-weight:400;color:#555;">Nicht verfügbar</span>
<span class="t" style="left:1010.0px;top:913.9px;font-size:14.8px;font-weight:400;color:#555;">Mindestaufenthalt</span>
<svg style="position:absolute;left:990px;top:913.8px;overflow:visible" width="11.5" height="12.6" viewBox="0 0 11 12"><path d="M6.2 0.36 A5.7 5.7 0 1 0 10.67 8.18 A4.7 4.7 0 0 1 6.2 0.36 Z" fill="#2a2a2a"/></svg>
<div style="position:absolute;left:0px;top:943px;width:1916px;height:2px;box-sizing:border-box;background:#bab2ba"></div>
<div style="position:absolute;left:0px;top:945px;width:1916px;height:1px;box-sizing:border-box;background:#ebe3eb"></div>
<svg style="position:absolute;left:1113px;top:481.5px;overflow:visible" width="19" height="28" viewBox="0 0 19 28"><path d="M0.6 0.6 L0.6 24 L5.8 19.2 L9.4 27 L13 25.4 L9.5 17.8 L16.8 17.8 Z" fill="#fff" stroke="#111" stroke-width="1.2" stroke-linejoin="miter"/></svg>
</body></html>
